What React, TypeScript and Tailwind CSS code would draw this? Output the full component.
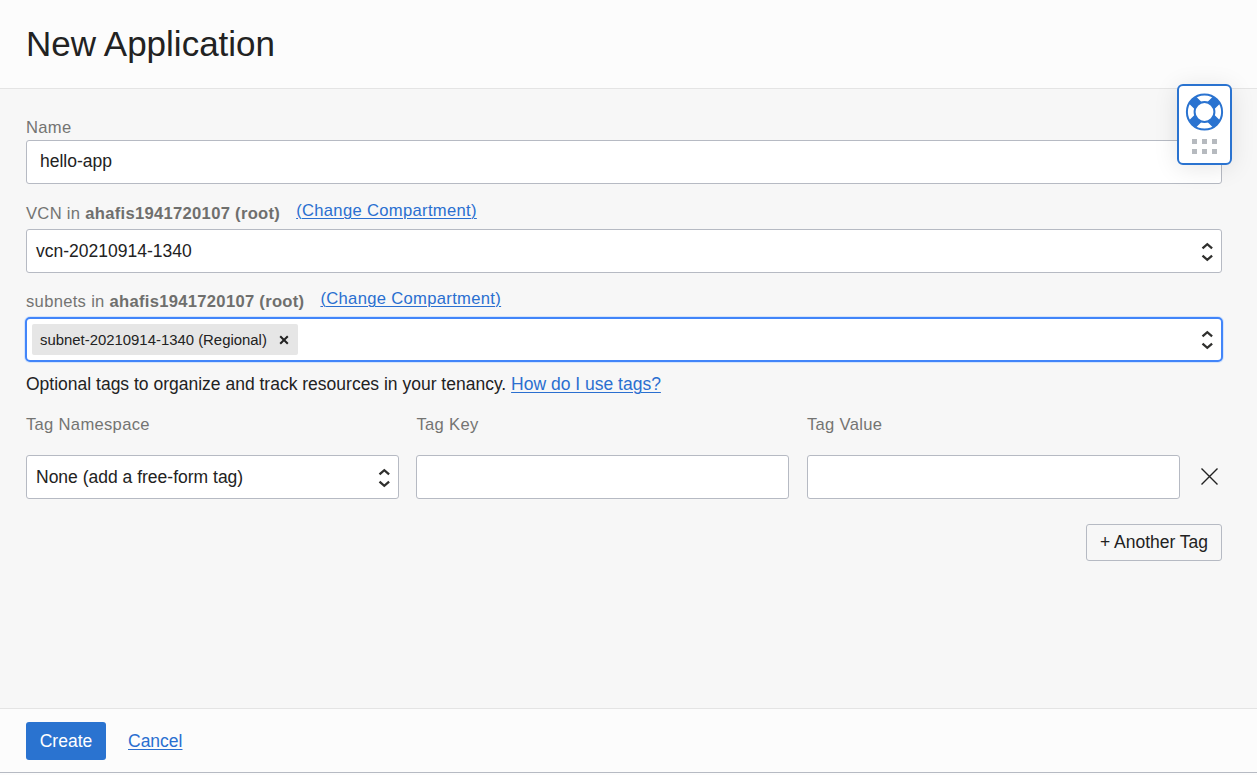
import type { ReactNode } from "react";

function Chevrons({ className = "mt-[2px]" }: { className?: string }) {
  return (
    <svg width="12" height="20" viewBox="0 0 12 20" fill="none" stroke="#30302e" strokeWidth="2.300" className={`shrink-0 ${className}`}>
      <path d="M1.500 6.400 6.300 2.200l4.800 4.200M1.500 13.600 6.300 17.800l4.800-4.200" />
    </svg>
  );
}

function Lifebuoy() {
  return (
    <svg width="39" height="38" viewBox="0 0 39 38" fill="none" stroke="#2a73d0" className="mr-px">
      <path d="M7.200 6.700 14 13.500M31.800 6.700 25 13.500M7.200 31.300 14 24.500M31.800 31.300 25 24.500" strokeWidth="10" />
      <circle cx="19.500" cy="19" r="17.600" strokeWidth="2" />
      <circle cx="19.500" cy="19" r="9.900" strokeWidth="2" fill="#fff" />
    </svg>
  );
}

function Link({ children, className = "" }: { children: ReactNode; className?: string }) {
  return (
    <a href="#" className={`text-[#2a6fd0] underline decoration-1 underline-offset-2 ${className}`}>
      {children}
    </a>
  );
}

function CompartmentLabel({ kind }: { kind: string }) {
  return (
    <div className="flex h-6 items-start gap-4 text-[16.6px] leading-6 text-[#747472]">
      <span className="pt-[3px] tracking-[0.3px]">
        {kind} in <b className="tracking-[0.29px] text-[#6f6f6d]">ahafis1941720107 (root)</b>
      </span>
      <Link className="tracking-[0.32px]">(Change Compartment)</Link>
    </div>
  );
}

const field = "flex h-[44px] items-center rounded-[3px] border border-[#b6bac3] bg-white";
const label = "h-6 text-[16.6px] leading-6 tracking-[0.3px] text-[#747472]";

export default function App() {
  return (
    <div className="relative flex h-[775px] w-full flex-col overflow-hidden bg-[#fcfcfc] text-[17.5px] text-[#222] [font-family:'Liberation_Sans',Arial,sans-serif]">
      <header className="h-[89px] shrink-0 border-b border-[#e4e4e4] pt-[23px] pl-[26px]">
        <h1 className="text-[35px] leading-[42px]">New Application</h1>
      </header>

      <main className="flex grow flex-col bg-[#f7f7f7] pr-[35px] pl-[26px]">
        <label className={`mt-[27px] ${label}`}>Name</label>
        <div className={`${field} pb-[2px] pl-[13px]`}>hello-app</div>

        <div className="mt-[15px] mb-[6px]"><CompartmentLabel kind="VCN" /></div>
        <div className={`${field} justify-between pr-2 pl-[9px]`}>
          <span className="pt-[1px]">vcn-20210914-1340</span>
          <Chevrons />
        </div>

        <div className="mt-[14px] mb-[6px]"><CompartmentLabel kind="subnets" /></div>
        <div className="-mx-px flex h-[45px] items-center justify-between rounded-[5px] border-2 border-[#4285f9] bg-white pr-[8px] pl-[5px] shadow-[0_0_0_1px_#d5e5fc]">
          <span className="flex h-[31px] w-[266px] items-center justify-between rounded-[2px] bg-[#e6e6e6] pr-[9px] pl-2 text-[14.9px]">
            <span className="pt-[2px]">subnet-20210914-1340 (Regional)</span>
            <svg width="10" height="10" viewBox="0 0 10 10" stroke="#222" strokeWidth="2">
              <path d="m1.200 1.200 7.600 7.600m0-7.600L1.200 8.800" />
            </svg>
          </span>
          <Chevrons className="mt-0" />
        </div>

        <p className="mt-[10px] h-6 leading-6">
          Optional tags to organize and track resources in your tenancy. <Link>How do I use tags?</Link>
        </p>

        <div className="mt-[17px] grid grid-cols-[373px_373px_373px] gap-x-[17.500px] gap-y-[18px]">
          <span className={label}>Tag Namespace</span>
          <span className={label}>Tag Key</span>
          <span className={label}>Tag Value</span>
          <div className={`${field} justify-between pr-2 pl-[9px]`}>
            <span className="pt-[1px]">None (add a free-form tag)</span>
            <Chevrons />
          </div>
          <div className={`${field} -ml-[0.5px] w-[373px]`} />
          <div className="flex items-center gap-[20px]">
            <div className={`${field} w-[373px] shrink-0`} />
            <svg width="19" height="18" viewBox="0 0 19 18" stroke="#222" strokeWidth="1.400" className="shrink-0">
              <path d="m1.500.5 16 16M17.500.5l-16 16" />
            </svg>
          </div>
        </div>

        <button className="mt-[25px] flex h-[37px] w-[136px] items-center justify-center self-end rounded-[3px] border border-[#b6bac3]">
          + Another Tag
        </button>
      </main>

      <footer className="flex h-[65px] shrink-0 items-start gap-[22px] border-t border-b border-t-[#e4e4e4] border-b-[#b6bac3] pt-[13px] pl-[26px]">
        <button className="h-[38px] w-20 rounded-[3px] bg-[#2a73d0] text-white">Create</button>
        <Link className="leading-[39px]">Cancel</Link>
      </footer>
      <div className="h-[2px] shrink-0" />

      <aside className="absolute top-[84px] left-[1177px] flex h-[81px] w-[55px] flex-col items-center rounded-[6px] border-2 border-[#2a73d0] bg-white pt-[7px] shadow-[0_3px_24px_rgba(0,0,0,0.1)]">
        <Lifebuoy />
        <div className="mt-[8px] grid grid-cols-3 gap-[5px]">
          {[0, 1, 2, 3, 4, 5].map((dot) => (
            <i key={dot} className="size-[5px] bg-[#b6babf]" />
          ))}
        </div>
      </aside>
    </div>
  );
}
